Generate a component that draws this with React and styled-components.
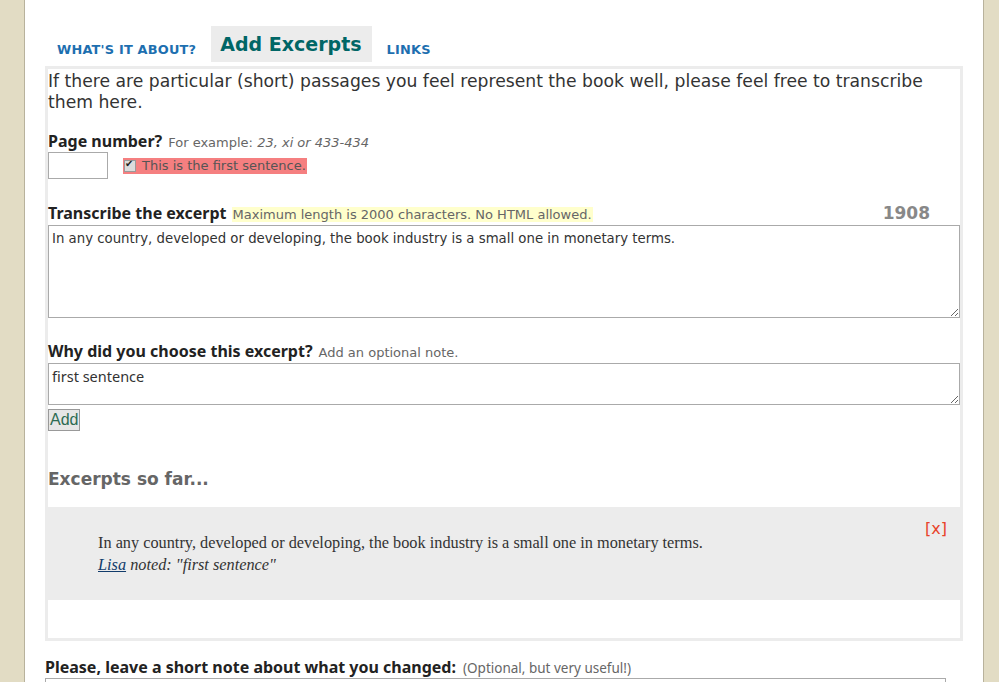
import React from "react";
import styled, { createGlobalStyle } from "styled-components";

const Global = createGlobalStyle`
  html, body { margin: 0; padding: 0; background: #e2dcc4; }
  body { font-family: "DejaVu Sans", Verdana, sans-serif; color: #333; }
`;

const Frame = styled.div`
  display: flex;
  height: 682px;
  overflow: hidden;
`;

const Side = styled.div`
  width: ${(p) => p.w}px;
  flex: none;
  background: #e2dcc4;
  border-${(p) => p.edge}: 1px solid #b8b29c;
`;

const Page = styled.div`
  flex: 1;
  background: #fff;
  padding: 26px 20px 0 20px;
`;

const Tabs = styled.div`
  display: flex;
  align-items: flex-end;
  padding-left: 12px;
  height: 36px;
  margin-bottom: 4px;
`;

const Tab = styled.a`
  font-family: "DejaVu Sans", Verdana, sans-serif;
  font-weight: bold;
  font-size: 12.9px;
  letter-spacing: 0.2px;
  text-transform: uppercase;
  color: #1d6fb0;
  text-decoration: none;
  padding: 0 15px 5px 0;
`;

const ActiveTab = styled.span`
  font-family: "DejaVu Sans", Verdana, sans-serif;
  font-weight: bold;
  font-size: 19px;
  color: #006666;
  background: #ececec;
  height: 36px;
  display: flex;
  align-items: center;
  padding: 0 10px 0 9px;
  margin-right: 15px;
  box-sizing: border-box;
`;

const Panel = styled.div`
  border: 3px solid #ececec;
  width: 912px;
  height: 569px;
`;

const Intro = styled.p`
  margin: 0;
  font-size: 17.2px;
  line-height: 21px;
  color: #333;
  padding-top: 2px;
  width: 905px;
`;

const Field = styled.div`
  margin-top: ${(p) => p.mt || 0}px;
`;

const LabelRow = styled.div`
  display: flex;
  align-items: baseline;
  gap: 5px;
`;

const Label = styled.span`
  font-family: "Noto Sans", sans-serif;
  font-weight: bold;
  font-size: 16px;
  color: #222;
  line-height: 20px;
`;

const Hint = styled.span`
  font-size: 13px;
  color: #666;
  background: ${(p) => (p.mark ? "#ffffcc" : "transparent")};
  padding: 0 1px;
`;

const Counter = styled.span`
  margin-left: auto;
  margin-right: 30px;
  font-weight: bold;
  font-size: 17px;
  color: #888;
`;

const PageRow = styled.div`
  display: flex;
  align-items: center;
  gap: 15px;
  margin-top: 1px;
`;

const SmallInput = styled.input`
  width: 60px;
  height: 27px;
  box-sizing: border-box;
  border: 1px solid #aaa;
  margin: 0;
`;

const FirstSentence = styled.label`
  display: flex;
  align-items: center;
  background: #f57f80;
  color: #555;
  font-size: 13px;
  height: 16px;
  padding-right: 1px;
`;

const Check = styled.input`
  appearance: none;
  width: 12px;
  height: 12px;
  margin: 0 6px 0 1px;
  background: #dcdcdc;
  border: 1px solid #9a9a9a;
  box-sizing: border-box;
  position: relative;
  &::after {
    content: "✔";
    position: absolute;
    left: 0;
    top: -3px;
    font-size: 10px;
    color: #222;
  }
`;

const Area = styled.textarea`
  display: block;
  width: 912px;
  height: ${(p) => p.h}px;
  box-sizing: border-box;
  border: 1px solid #aaa;
  margin: 2px 0 0 0;
  padding: ${(p) => (p.alt ? "2px 3px" : "5px 3px")};
  resize: vertical;
  font-family: ${(p) => (p.alt ? '"Noto Sans", sans-serif' : '"DejaVu Sans", Verdana, sans-serif')};
  font-size: ${(p) => (p.alt ? 14.5 : 13.3)}px;
  color: #333;
`;

const AddButton = styled.button`
  display: block;
  margin-top: 4px;
  height: 22px;
  padding: 0 1px;
  background: #e6e6e6;
  border: 1px solid #999;
  font-family: "Liberation Sans", Arial, sans-serif;
  font-size: 16px;
  color: #2d6b52;
`;

const SoFar = styled.h3`
  margin: 38px 0 0 0;
  font-size: 17px;
  font-weight: bold;
  color: #666;
  line-height: 20px;
`;

const ExcerptBox = styled.div`
  margin-top: 18px;
  background: #ececec;
  height: 93px;
  padding: 21px 0 0 50px;
  box-sizing: border-box;
  position: relative;
  font-family: "Liberation Serif", Georgia, serif;
  font-size: 16.3px;
  color: #333;
  line-height: 22px;
`;

const Remove = styled.a`
  position: absolute;
  right: 13px;
  top: 11px;
  color: #e8432a;
  font-family: "DejaVu Sans", Verdana, sans-serif;
  font-size: 16px;
  text-decoration: none;
`;

const Quote = styled.div`
  margin-top: 4px;
`;

const Note = styled.div`
  font-style: italic;
  a { color: #123c6b; }
`;

const ChangeRow = styled.div`
  margin-top: 16px;
  display: flex;
  align-items: baseline;
  gap: 7px;
`;

const ChangeHint = styled.span`
  font-family: "Noto Sans", sans-serif;
  font-size: 13.5px;
  color: #666;
`;

const ChangeInput = styled.div`
  margin-top: 1px;
  height: 30px;
  width: 899px;
  border: 1px solid #aaa;
`;

export default function App() {
  return (
    <>
      <Global />
      <Frame>
        <Side w={24} edge="right" />
        <Page>
          <Tabs>
            <Tab href="#">What's it about?</Tab>
            <ActiveTab>Add Excerpts</ActiveTab>
            <Tab href="#">Links</Tab>
          </Tabs>
          <Panel>
            <Intro>
              If there are particular (short) passages you feel represent the book well, please feel free to transcribe
              them here.
            </Intro>
            <Field mt={18}>
              <LabelRow>
                <Label>Page number?</Label>
                <Hint>
                  For example: <em>23, xi or 433-434</em>
                </Hint>
              </LabelRow>
              <PageRow>
                <SmallInput type="text" />
                <FirstSentence>
                  <Check type="checkbox" defaultChecked />
                  This is the first sentence.
                </FirstSentence>
              </PageRow>
            </Field>
            <Field mt={24}>
              <LabelRow>
                <Label>Transcribe the excerpt</Label>
                <Hint mark>Maximum length is 2000 characters. No HTML allowed.</Hint>
                <Counter>1908</Counter>
              </LabelRow>
              <Area
                h={93}
                defaultValue="In any country, developed or developing, the book industry is a small one in monetary terms."
              />
            </Field>
            <Field mt={23}>
              <LabelRow>
                <Label>Why did you choose this excerpt?</Label>
                <Hint>Add an optional note.</Hint>
              </LabelRow>
              <Area h={42} alt defaultValue="first sentence" />
              <AddButton>Add</AddButton>
            </Field>
            <SoFar>Excerpts so far...</SoFar>
            <ExcerptBox>
              <Remove href="#">[x]</Remove>
              <Quote>In any country, developed or developing, the book industry is a small one in monetary terms.</Quote>
              <Note>
                <a href="#">Lisa</a> noted: "first sentence"
              </Note>
            </ExcerptBox>
          </Panel>
          <ChangeRow>
            <Label>Please, leave a short note about what you changed:</Label>
            <ChangeHint>(Optional, but very useful!)</ChangeHint>
          </ChangeRow>
          <ChangeInput />
        </Page>
        <Side w={15} edge="left" />
      </Frame>
    </>
  );
}
